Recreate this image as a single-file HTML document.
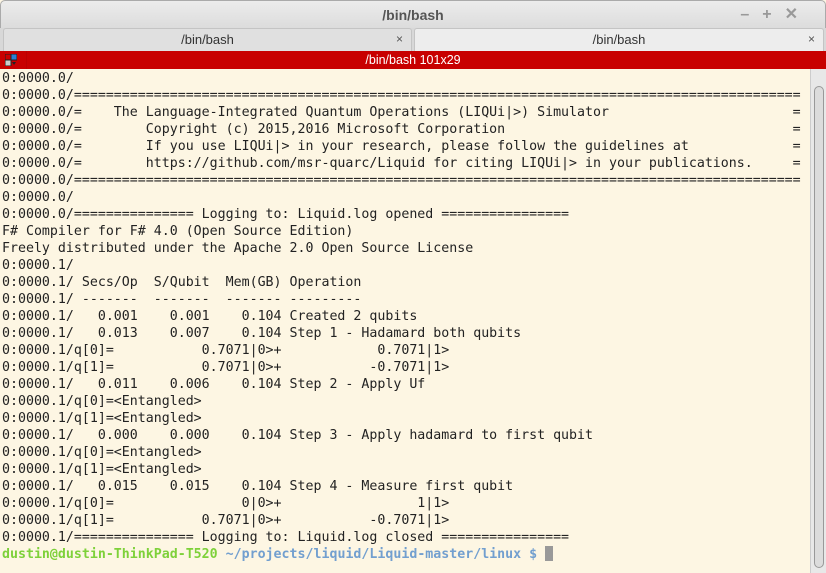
<!DOCTYPE html>
<html><head><meta charset="utf-8"><style>
*{margin:0;padding:0;box-sizing:border-box}
body{width:826px;height:573px;overflow:hidden;background:#fdf6e3;font-family:"Liberation Sans",sans-serif;position:relative}
#title{position:absolute;left:0;top:0;width:826px;height:28px;background:linear-gradient(#ececec,#dcdcdc);border:1px solid #aaa;border-bottom:none;border-radius:5px 5px 0 0;text-align:center;font-size:14px;font-weight:bold;color:#555;line-height:29px}
#ctl{position:absolute;right:14px;top:0;color:#999;font-size:16px;letter-spacing:13px;line-height:28px}
#tabs{position:absolute;left:0;top:28px;width:826px;height:23px;background:#d8d8d8}
.tab{position:absolute;top:0;height:23px;border:1px solid #c4c4c4;border-bottom:none;border-radius:3px 3px 0 0;font-size:13px;color:#333;text-align:center;line-height:21px}
.tab span{position:absolute;right:8px;top:0;color:#555;font-size:12px}
#red{position:absolute;left:0;top:51px;width:826px;height:18px;background:#c80000;color:#fff;font-size:12.5px;text-align:center;line-height:18px}
#ico{position:absolute;left:5px;top:3px;width:12px;height:12px}
#sep{position:absolute;left:26px;top:0;width:1px;height:18px;background:#b00}
#term{position:absolute;left:2px;top:70px;font-family:"DejaVu Sans Mono",monospace;font-size:13.28px;line-height:17px;color:#222;white-space:pre}
.g{color:#7ed13a;font-weight:bold}.b{color:#729fcf;font-weight:bold}
#cur{display:inline-block;width:8px;height:15px;background:#999;vertical-align:-3px}
#sb{position:absolute;left:810px;top:69px;width:16px;height:504px;background:#e8e8e8;border-left:1px solid #ccc}
#th{position:absolute;left:3px;top:17px;width:10px;height:482px;background:#dcdcdc;border:1px solid #999;border-radius:5px}
</style></head><body>
<div id="title">/bin/bash<div id="ctl">–+✕</div></div>
<div id="tabs">
<div class="tab" style="left:3px;width:409px;background:#e0e0e0">/bin/bash<span>×</span></div>
<div class="tab" style="left:414px;width:410px;background:#ededed">/bin/bash<span>×</span></div>
</div>
<div id="red"><svg id="ico" viewBox="0 0 12 12"><rect x="0" y="0" width="6" height="6" fill="#c00" stroke="#222" stroke-width="1"/><rect x="6" y="0" width="6" height="6" fill="#2a7fd4" stroke="#222" stroke-width="1"/><rect x="0" y="6" width="6" height="6" fill="#ccc" stroke="#222" stroke-width="1"/><path d="M7 8h4l-2 3z" fill="#222"/></svg><div id="sep"></div>/bin/bash 101x29</div>
<div id="term">0:0000.0/
0:0000.0/===========================================================================================
0:0000.0/=    The Language-Integrated Quantum Operations (LIQUi|>) Simulator                       =
0:0000.0/=        Copyright (c) 2015,2016 Microsoft Corporation                                    =
0:0000.0/=        If you use LIQUi|> in your research, please follow the guidelines at             =
0:0000.0/=        https://github.com/msr-quarc/Liquid for citing LIQUi|> in your publications.     =
0:0000.0/===========================================================================================
0:0000.0/
0:0000.0/=============== Logging to: Liquid.log opened ================
F# Compiler for F# 4.0 (Open Source Edition)
Freely distributed under the Apache 2.0 Open Source License
0:0000.1/
0:0000.1/ Secs/Op  S/Qubit  Mem(GB) Operation
0:0000.1/ -------  -------  ------- ---------
0:0000.1/   0.001    0.001    0.104 Created 2 qubits
0:0000.1/   0.013    0.007    0.104 Step 1 - Hadamard both qubits
0:0000.1/q[0]=           0.7071|0>+            0.7071|1>
0:0000.1/q[1]=           0.7071|0>+           -0.7071|1>
0:0000.1/   0.011    0.006    0.104 Step 2 - Apply Uf
0:0000.1/q[0]=&lt;Entangled&gt;
0:0000.1/q[1]=&lt;Entangled&gt;
0:0000.1/   0.000    0.000    0.104 Step 3 - Apply hadamard to first qubit
0:0000.1/q[0]=&lt;Entangled&gt;
0:0000.1/q[1]=&lt;Entangled&gt;
0:0000.1/   0.015    0.015    0.104 Step 4 - Measure first qubit
0:0000.1/q[0]=                0|0>+                 1|1>
0:0000.1/q[1]=           0.7071|0>+           -0.7071|1>
0:0000.1/=============== Logging to: Liquid.log closed ================
<span class="g">dustin@dustin-ThinkPad-T520</span> <span class="b">~/projects/liquid/Liquid-master/linux $</span> <span id="cur"></span></div>
<div id="sb"><div id="th"></div></div>
</body></html>
